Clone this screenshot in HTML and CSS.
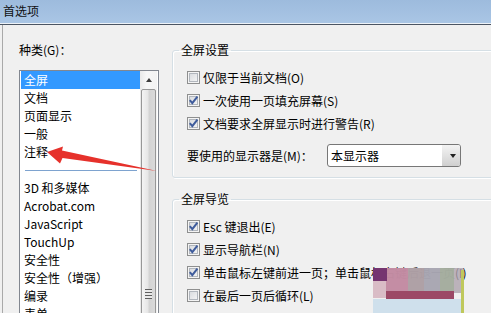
FILE: index.html
```html
<!DOCTYPE html>
<html lang="zh-CN">
<head>
    <meta charset="UTF-8">
    <meta name="viewport" content="width=device-width, initial-scale=1.0">
    <title>首选项</title>
    <link rel="stylesheet" href="styles.css">
</head>
<body>
<div class="window">
    <div class="titlebar">首选项</div>

    <div class="main">
        <div class="left">
            <div class="label">种类(G)：</div>
            <div class="listbox">
                <ul class="items">
                    <li class="selected">全屏</li>
                    <li>文档</li>
                    <li>页面显示</li>
                    <li>一般</li>
                    <li>注释</li>
                    <li class="sep"></li>
                    <li>3D 和多媒体</li>
                    <li>Acrobat.com</li>
                    <li>JavaScript</li>
                    <li>TouchUp</li>
                    <li>安全性</li>
                    <li>安全性（增强）</li>
                    <li>编录</li>
                    <li>表单</li>
                </ul>
                <div class="scrollbar">
                    <div class="arrow-up"><span class="tri-up"></span></div>
                    <div class="thumb"><span class="grip"></span></div>
                </div>
            </div>
        </div>

        <div class="right">
            <fieldset class="group">
                <legend>全屏设置</legend>
                <div class="row"><span class="cb"></span>仅限于当前文档(O)</div>
                <div class="row"><span class="cb checked"><svg width="11" height="11" viewBox="0 0 11 11"><path d="M1.8 5.2 L4.3 8.2 L9.4 1.6" fill="none" stroke="#3f5c9c" stroke-width="2"/></svg></span>一次使用一页填充屏幕(S)</div>
                <div class="row"><span class="cb checked"><svg width="11" height="11" viewBox="0 0 11 11"><path d="M1.8 5.2 L4.3 8.2 L9.4 1.6" fill="none" stroke="#3f5c9c" stroke-width="2"/></svg></span>文档要求全屏显示时进行警告(R)</div>
                <div class="row monitor">
                    <span class="monitor-label">要使用的显示器是(M)：</span>
                    <div class="select">
                        <span class="select-text">本显示器</span>
                        <span class="drop"><span class="tri-down"></span></span>
                    </div>
                </div>
            </fieldset>

            <fieldset class="group second">
                <legend>全屏导览</legend>
                <div class="row"><span class="cb checked"><svg width="11" height="11" viewBox="0 0 11 11"><path d="M1.8 5.2 L4.3 8.2 L9.4 1.6" fill="none" stroke="#3f5c9c" stroke-width="2"/></svg></span>Esc 键退出(E)</div>
                <div class="row"><span class="cb checked"><svg width="11" height="11" viewBox="0 0 11 11"><path d="M1.8 5.2 L4.3 8.2 L9.4 1.6" fill="none" stroke="#3f5c9c" stroke-width="2"/></svg></span>显示导航栏(N)</div>
                <div class="row"><span class="cb checked"><svg width="11" height="11" viewBox="0 0 11 11"><path d="M1.8 5.2 L4.3 8.2 L9.4 1.6" fill="none" stroke="#3f5c9c" stroke-width="2"/></svg></span>单击鼠标左键前进一页；单击鼠标右键后退一页(I)</div>
                <div class="row"><span class="cb"></span>在最后一页后循环(L)</div>
            </fieldset>
        </div>
    </div>

    <!-- annotation arrow and smudge drawn over the dialog -->
    <svg class="overlay" width="491" height="313" viewBox="0 0 491 313">
        <defs>
            <filter id="soft"><feGaussianBlur stdDeviation="0.6"/></filter>
        </defs>
        <polygon fill="#e6312b" points="47,152 63,146.5 62,150.5 157,171 62.5,158 60,163.5"/>
        <g filter="url(#soft)">
            <rect x="373" y="268" width="90" height="25" fill="#aea3ad" opacity="0.8"/>
            <rect x="386" y="268" width="22" height="25" fill="#c48aa1" opacity="0.9"/>
            <rect x="408" y="268" width="16" height="25" fill="#ae9ea4" opacity="0.9"/>
            <rect x="424" y="268" width="16" height="25" fill="#a7a7b3" opacity="0.85"/>
            <rect x="440" y="268" width="14" height="25" fill="#a3ad9c" opacity="0.9"/>
            <rect x="373" y="268" width="14" height="13" fill="#74366f"/>
            <rect x="373" y="281" width="13" height="17" fill="#d9bcc6"/>
            <rect x="386" y="291" width="68" height="8" fill="#9c4866"/>
            <rect x="373" y="299" width="88" height="14" fill="#cfe0ec"/>
            <rect x="461" y="270" width="3" height="43" fill="#bfc85c"/>
        </g>
    </svg>
</div>
</body>
</html>
```

FILE: styles.css
```css
* {
    box-sizing: border-box;
}

body {
    margin: 0;
    background-color: #f0f0f0;
    font-family: "Noto Sans CJK SC", "Microsoft YaHei", sans-serif;
    font-size: 12px;
    color: #000;
}

.window {
    position: relative;
    width: 491px;
    height: 313px;
    overflow: hidden;
}

.titlebar {
    height: 25px;
    line-height: 21px;
    padding-left: 3px;
    color: #111;
    background: linear-gradient(#9dbbdd, #aac6e5);
    border-bottom: 1px solid #4b5563;
    box-shadow: inset 0 -1px 0 #eef3f8;
}

.main {
    display: flex;
    height: 288px;
}

.left {
    width: 164px;
    margin-left: 2px;
    padding-left: 16px;
    border-left: 1px solid #a9a9a9;
}

.label {
    margin-top: 16px;
    line-height: 18px;
}

.listbox {
    display: flex;
    width: 140px;
    height: 260px;
    margin-top: 11px;
    padding-left: 1px;
    background-color: #fff;
    border: 1px solid #828790;
    border-bottom: none;
}

.items {
    list-style: none;
    margin: 0;
    padding: 0;
    width: 119px;
}

.items li {
    height: 18px;
    line-height: 18px;
    padding-left: 3px;
    white-space: nowrap;
}

.items li.selected {
    background-color: #3399ff;
    color: #fff;
}

.items li.sep {
    padding: 9px 3px 0 4px;
}

.items li.sep::before {
    content: "";
    display: block;
    height: 1px;
    background-color: #7ea3cf;
}

.scrollbar {
    width: 17px;
    background: linear-gradient(to right, #e9e9e9, #f7f7f7 40%, #f3f3f3);
}

.arrow-up {
    height: 18px;
    display: flex;
    justify-content: center;
    align-items: center;
}

.tri-up {
    width: 0;
    height: 0;
    border-left: 3.5px solid transparent;
    border-right: 3.5px solid transparent;
    border-bottom: 4px solid #3c3c3c;
}

.thumb {
    display: flex;
    justify-content: center;
    height: 420px;
    margin: 0 1px;
    padding-top: 199px;
    border: 1px solid #979797;
    border-radius: 2px;
    background: linear-gradient(to right, #f4f4f4, #e6e6e6 45%, #d3d3d3 55%, #dadada);
}

.grip {
    width: 7px;
    height: 10px;
    background: repeating-linear-gradient(#5f5f5f 0, #5f5f5f 1px, #e9e9e9 1px, #e9e9e9 3px);
}

.right {
    flex: 1;
    min-width: 0;
    padding-left: 6px;
}

.group {
    width: 340px;
    margin: 17px 0 0;
    padding: 8px 0 10px 6px;
    border: 1px solid #d5dfe5;
    border-radius: 3px;
    box-shadow: inset 1px 1px 0 #fff, 1px 1px 0 #fff;
}

.group.second {
    margin-top: 13px;
}

legend {
    padding: 0 2px;
    line-height: 16px;
}

.row {
    display: flex;
    align-items: center;
    gap: 3px;
    height: 23px;
    margin-left: 8px;
    white-space: nowrap;
}

.cb {
    flex: none;
    width: 13px;
    height: 13px;
    padding: 0;
    border: 1px solid #8e8f8f;
    background: linear-gradient(135deg, #d3d6da, #f9f9f9);
    box-shadow: inset 0 0 0 1px #f4f4f4, inset 0 0 0 2px #b1b6bd;
}

.cb svg {
    display: block;
}

.monitor {
    gap: 0;
    margin-top: 9px;
}

.monitor-label {
    width: 140px;
}

.select {
    display: flex;
    width: 134px;
    height: 23px;
    background-color: #fff;
    border: 1px solid #777;
    border-radius: 3px;
}

.select-text {
    padding-left: 3px;
    line-height: 21px;
}

.drop {
    display: flex;
    justify-content: center;
    align-items: center;
    width: 18px;
    margin-left: auto;
    padding-left: 4px;
    border-radius: 0 2px 2px 0;
    background: linear-gradient(#f3f3f3, #e2e2e2 50%, #cfcfcf);
}

.tri-down {
    width: 0;
    height: 0;
    border-left: 3.5px solid transparent;
    border-right: 3.5px solid transparent;
    border-top: 4px solid #222;
}

.overlay {
    position: absolute;
    left: 0;
    top: 0;
    pointer-events: none;
}
```
